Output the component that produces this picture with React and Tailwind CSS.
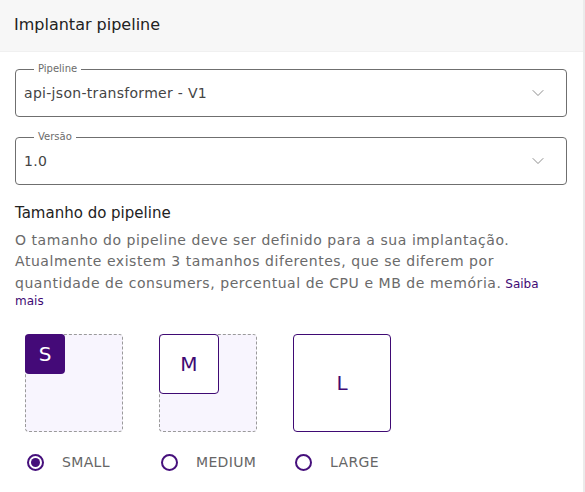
import { ChevronDown } from 'lucide-react';

const font = { fontFamily: '"DejaVu Sans", sans-serif' };

const SelectField = ({ label, value }) => (
  <div className="relative h-[48px] rounded border border-[#6f6f6f] flex items-center pl-[8px] pr-[18px]">
    <span className="absolute -top-[8px] left-[18px] bg-white px-[4px] text-[10px] leading-[14px] text-[#6b6b6b]">
      {label}
    </span>
    <span className="flex-1 text-[14px] tracking-[0.3px] text-[#444]">{value}</span>
    <ChevronDown className="w-[20px] h-[20px] text-[#777]" strokeWidth={1} />
  </div>
);

const SizeCard = ({ letter, inner }) => {
  if (inner === 'full') {
    return (
      <div className="w-[98px] h-[98px] rounded border border-[#3f0a74] flex items-center justify-center text-[20px] text-[#3f0a74]">
        {letter}
      </div>
    );
  }
  return (
    <div className="w-[98px] h-[98px] rounded border border-dashed border-[#9a9a9a] bg-[#f8f5fe]">
      {inner === 'small' ? (
        <div className="w-[40px] h-[40px] -m-px rounded bg-[#440a78] flex items-center justify-center text-[20px] text-white">
          {letter}
        </div>
      ) : (
        <div className="w-[60px] h-[60px] -m-px rounded border border-[#3f0a74] bg-white flex items-center justify-center text-[20px] text-[#3f0a74]">
          {letter}
        </div>
      )}
    </div>
  );
};

const Radio = ({ label, checked }) => (
  <div className="flex items-center gap-[18px] pl-[2px]">
    <span className="w-[17px] h-[17px] rounded-full border-2 border-[#46107c] flex items-center justify-center">
      {checked && <span className="w-[9px] h-[9px] rounded-full bg-[#46107c]" />}
    </span>
    <span className="text-[14px] text-[#666] tracking-wide">{label}</span>
  </div>
);

export default function App() {
  return (
    <div className="w-[585px] h-[492px] bg-white border-r-2 border-[#ebebeb] overflow-hidden" style={font}>
      <div className="h-[52px] bg-[#f7f7f7] border-b border-[#f0f0f0] flex items-center px-[14px] pb-[2px]">
        <h1 className="text-[16px] text-[#222]">Implantar pipeline</h1>
      </div>
      <div className="pl-[15px] pr-[16px] pt-[17px]">
        <SelectField label="Pipeline" value="api-json-transformer - V1" />
        <div className="mt-[20px]">
          <SelectField label="Versão" value="1.0" />
        </div>
        <h2 className="mt-[17px] text-[15px] text-[#222]">Tamanho do pipeline</h2>
        <p className="mt-[5px] text-[12px] leading-[14px]">
          <span className="text-[14px] leading-[21.5px] tracking-[0.55px] text-[#6a6a6a]">
            O tamanho do pipeline deve ser definido para a sua implantação. Atualmente existem 3 tamanhos diferentes, que se diferem por quantidade de consumers, percentual de CPU e MB de memória.
          </span>{' '}
          <a className="text-[#3f0a74]">Saiba mais</a>
        </p>
        <div className="mt-[26px] pl-[10px] flex gap-[36px]">
          <div className="flex flex-col gap-[20px]">
            <SizeCard letter="S" inner="small" />
            <Radio label="SMALL" checked />
          </div>
          <div className="flex flex-col gap-[20px]">
            <SizeCard letter="M" inner="medium" />
            <Radio label="MEDIUM" />
          </div>
          <div className="flex flex-col gap-[20px]">
            <SizeCard letter="L" inner="full" />
            <Radio label="LARGE" />
          </div>
        </div>
      </div>
    </div>
  );
}
